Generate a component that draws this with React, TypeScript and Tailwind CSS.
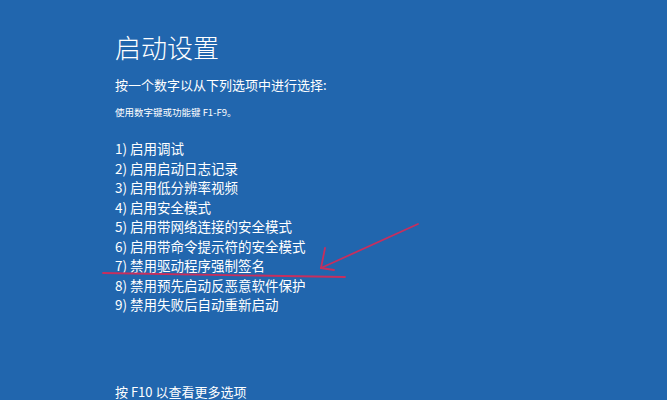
const options = [
  "1) 启用调试",
  "2) 启用启动日志记录",
  "3) 启用低分辨率视频",
  "4) 启用安全模式",
  "5) 启用带网络连接的安全模式",
  "6) 启用带命令提示符的安全模式",
  "7) 禁用驱动程序强制签名",
  "8) 禁用预先启动反恶意软件保护",
  "9) 禁用失败后自动重新启动",
];

export default function App() {
  return (
    <div
      className="relative h-[400px] w-[667px] overflow-hidden bg-[#2166ae] text-white"
      style={{ fontFamily: '"Noto Sans CJK SC", "Noto Sans", sans-serif' }}
    >
      <div className="flex flex-col pl-[115px] pt-[33px]">
        <h1 className="text-[26px] font-light leading-[28px]">启动设置</h1>
        <p className="mt-[16px] text-[13px] leading-[16px]">按一个数字以从下列选项中进行选择:</p>
        <p className="mt-[13px] text-[9.5px] leading-[12px]">使用数字键或功能键 F1-F9。</p>
        <ul className="mt-[21px] flex flex-col">
          {options.map((o) => (
            <li key={o} className="text-[13.5px] leading-[19.5px]">
              {o}
            </li>
          ))}
        </ul>
        <p className="mt-[69px] text-[13px] leading-[16px]">按 F10 以查看更多选项</p>
      </div>

      {/* hand-drawn annotation */}
      <svg className="pointer-events-none absolute left-0 top-0" width="667" height="400">
        <g stroke="#c72f5e" strokeWidth="1.8" fill="none" strokeLinecap="round">
          <path d="M103 273 Q220 275 345 277" />
          <path d="M418 224 L321 268" />
          <path d="M321 268 L325 248" />
          <path d="M321 268 L334 270" />
        </g>
      </svg>
    </div>
  );
}
